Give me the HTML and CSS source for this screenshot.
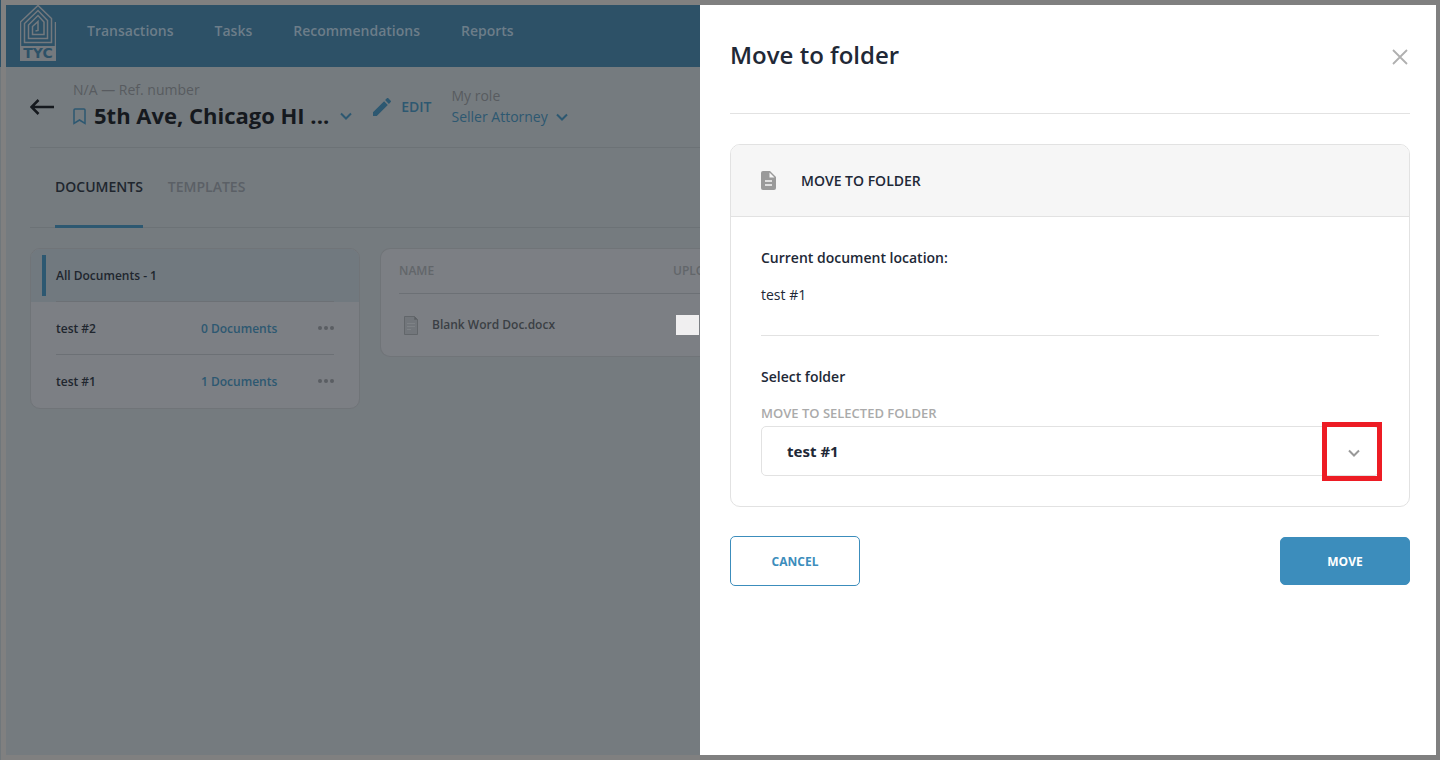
FILE: index.html
```html
<!DOCTYPE html>
<html lang="en">
<head>
    <meta charset="UTF-8">
    <meta name="viewport" content="width=device-width, initial-scale=1.0">
    <title>Move to folder</title>
    <link rel="stylesheet" href="styles.css">
</head>
<body>
    <div class="app">
        <header class="topbar">
            <a href="#" class="logo" aria-label="TYC">
                <svg width="36" height="56" viewBox="0 0 36 56">
                    <rect x="0" y="41" width="36" height="15" fill="#74797e"/>
                    <path d="M35.500 17V41M0.500 41V17L18 0.500L31.500 13.500V37.500H4.500V18.500L18 5.500L27.500 15.500V33.500H8.500V20L18 10.500L24 17V29.500H12.500V21.500L18 16.500V25.500L15.500 26" fill="none" stroke="#74797e" stroke-width="1.500"/>
                    <text x="18" y="53" class="logo-text" text-anchor="middle">TYC</text>
                </svg>
            </a>
            <nav class="nav">
                <a href="#">Transactions</a>
                <a href="#">Tasks</a>
                <a href="#">Recommendations</a>
                <a href="#">Reports</a>
            </nav>
        </header>

        <main class="content">
            <!-- Transaction header -->
            <section class="deal">
                <a href="#" class="back" aria-label="Back">
                    <svg width="24" height="16" viewBox="0 0 24 16" fill="none" stroke="#15191e" stroke-width="2.500"><path d="M24 8H2M8.500 1L1.500 8L8.500 15"/></svg>
                </a>
                <div class="deal-info">
                    <div class="ref">N/A — Ref. number</div>
                    <div class="deal-title">
                        <svg width="13" height="17" viewBox="0 0 13 17" fill="none" stroke="#2d5871" stroke-width="1.500"><path d="M1 2Q1 1 2 1H11Q12 1 12 2V15.500L6.500 12L1 15.500Z"/></svg>
                        <h1>5th Ave, Chicago HI ...</h1>
                        <svg class="chevron" width="12" height="8" viewBox="0 0 12 8" fill="none" stroke="#2d5871" stroke-width="2"><path d="M1 1.500L6 6.500L11 1.500"/></svg>
                    </div>
                </div>
                <button class="edit">
                    <svg width="18" height="18" viewBox="0 0 18 18" fill="#2d5871"><path d="M0 14.250V18H3.750L14.800 6.900L11.100 3.200ZM17.700 4.100C18.100 3.700 18.100 3 17.700 2.700L15.300 0.300C15 -0.100 14.300 -0.100 13.900 0.300L12.100 2.100L15.900 5.900Z"/></svg>
                    EDIT
                </button>
                <div class="role">
                    <div class="role-label">My role</div>
                    <button class="role-value">Seller Attorney
                        <svg width="12" height="8" viewBox="0 0 12 8" fill="none" stroke="#2d5871" stroke-width="2"><path d="M1 1.500L6 6.500L11 1.500"/></svg>
                    </button>
                </div>
            </section>

            <nav class="tabs">
                <a href="#" class="tab active">DOCUMENTS</a>
                <a href="#" class="tab">TEMPLATES</a>
            </nav>

            <div class="columns">
                <ul class="folders">
                    <li class="folder current"><div class="folder-row"><span>All Documents - 1</span></div></li>
                    <li class="folder">
                        <div class="folder-row">
                            <span class="folder-name">test #2</span>
                            <a href="#">0 Documents</a>
                            <button class="more" aria-label="More"><svg width="16" height="4" viewBox="0 0 16 4" fill="#5a5e63"><circle cx="2" cy="2" r="2"/><circle cx="8" cy="2" r="2"/><circle cx="14" cy="2" r="2"/></svg></button>
                        </div>
                    </li>
                    <li class="folder">
                        <div class="folder-row">
                            <span class="folder-name">test #1</span>
                            <a href="#">1 Documents</a>
                            <button class="more" aria-label="More"><svg width="16" height="4" viewBox="0 0 16 4" fill="#5a5e63"><circle cx="2" cy="2" r="2"/><circle cx="8" cy="2" r="2"/><circle cx="14" cy="2" r="2"/></svg></button>
                        </div>
                    </li>
                </ul>

                <div class="files">
                    <table>
                        <thead>
                            <tr><th class="col-name">NAME</th><th>UPLOADED</th></tr>
                        </thead>
                        <tbody>
                            <tr>
                                <td>
                                    <div class="file">
                                        <svg width="14" height="19" viewBox="0 0 14 19" fill="#72767b" stroke="#62666a"><path d="M0.500 0.500H10.500L13.500 3.500V18.500H0.500Z"/><path d="M10.500 0.500V3.500H13.500" fill="#5a5e63"/><path d="M3 7.500H11M3 10.500H11M3 13.500H7" stroke="#7e8286"/></svg>
                                        Blank Word Doc.docx
                                    </div>
                                </td>
                                <td><div class="redacted"></div></td>
                            </tr>
                        </tbody>
                    </table>
                </div>
            </div>
        </main>
    </div>

    <!-- Move to folder panel -->
    <aside class="drawer">
        <div class="drawer-head">
            <h2>Move to folder</h2>
            <button class="close" aria-label="Close">
                <svg width="16" height="16" viewBox="0 0 16 16" fill="none" stroke="#b0b0b0" stroke-width="1.800"><path d="M1 1L15 15M15 1L1 15"/></svg>
            </button>
        </div>
        <section class="card">
            <div class="card-head">
                <svg width="15" height="19" viewBox="0 0 15 19"><path d="M2 0H9L15 6V17Q15 19 13 19H2Q0 19 0 17V2Q0 0 2 0Z" fill="#9a9a9a"/><path d="M8.500 1.500V6.500H13.500Z" fill="#f6f6f6"/><path d="M4 10H11M4 14H11" stroke="#f6f6f6" stroke-width="1.500"/></svg>
                <h3>MOVE TO FOLDER</h3>
            </div>
            <div class="card-body">
                <div class="location">
                    <h4>Current document location:</h4>
                    <p>test #1</p>
                </div>
                <h4>Select folder</h4>
                <label for="folder">MOVE TO SELECTED FOLDER</label>
                <div class="select-box">
                    <select id="folder">
                        <option>test #1</option>
                        <option>test #2</option>
                    </select>
                    <div class="highlight">
                        <svg width="12" height="8" viewBox="0 0 12 8" fill="none" stroke="#999" stroke-width="2"><path d="M1 1.500L6 6.500L11 1.500"/></svg>
                    </div>
                </div>
            </div>
        </section>
        <div class="actions">
            <button class="btn">CANCEL</button>
            <button class="btn btn-primary">MOVE</button>
        </div>
    </aside>
</body>
</html>
```
FILE: styles.css
```css
* {
    box-sizing: border-box;
}
body {
    margin: 0;
    padding: 5px 4px 5px 6px;
    min-height: 100vh;
    display: flex;
    font-family: "Open Sans", "Noto Sans", sans-serif;
    font-size: 14px;
    line-height: 20px;
    color: #212836;
    background: linear-gradient(#2d5167 67px, #70777b 67px) no-repeat left top / 1px 100% #808080;
}
h1, h2, h3, h4, p, ul {
    margin: 0;
    padding: 0;
}
a {
    color: inherit;
    text-decoration: none;
}
button {
    font: inherit;
    color: inherit;
    background: none;
    border: none;
    padding: 0;
    cursor: pointer;
}
svg {
    display: block;
    flex: none;
}
.app {
    flex: 1;
    min-width: 0;
    overflow: hidden;
    background: #757b7f;
}
.topbar {
    height: 62px;
    display: flex;
    background: #2d5167;
    padding-left: 14px;
}
.logo-text {
    font-family: "DejaVu Sans", sans-serif;
    font-size: 14px;
    font-weight: 700;
    fill: #2d5167;
}
.nav {
    display: flex;
    gap: 41px;
    margin-left: 31px;
    padding-top: 16px;
    font-weight: 600;
    color: #6c7d89;
}
.content {
    padding-left: 24px;
}
.deal {
    height: 81px;
    display: flex;
    border-bottom: 1px solid #6c7276;
    white-space: nowrap;
}
.back {
    margin-top: 32px;
}
.deal-info {
    margin-left: 19px;
    padding-top: 13px;
}
.ref,
.role-label {
    color: #585b60;
}
.deal-title {
    display: flex;
    align-items: center;
    height: 32px;
}
.deal-title h1 {
    margin-left: 8px;
    padding-bottom: 2px;
    font-size: 22px;
    line-height: 30px;
    color: #15191e;
}
.chevron {
    margin-left: 11px;
}
.edit {
    display: flex;
    align-items: center;
    gap: 10px;
    height: 80px;
    margin-left: 21px;
    font-weight: 600;
    color: #2d5871;
}
.role {
    margin-left: 20px;
    padding-top: 19px;
}
.role-value {
    display: flex;
    align-items: center;
    gap: 8px;
    margin-top: 1px;
    color: #2d5871;
}
.tabs {
    display: flex;
    gap: 25px;
    height: 80px;
    padding-left: 25px;
    border-bottom: 1px solid #6c7276;
    font-weight: 600;
}
.tab {
    height: 80px;
    padding-top: 29px;
    color: #5b6066;
}
.tab.active {
    color: #20262e;
    border-bottom: 3px solid #2d5871;
}
.columns {
    display: flex;
    align-items: flex-start;
    gap: 20px;
    margin-top: 20px;
    font-size: 12px;
    font-weight: 600;
}
.folders,
.files {
    border: 1px solid #707478;
    border-radius: 10px;
    background: #7c7f84;
}
.folders {
    flex: none;
    width: 330px;
    list-style: none;
    overflow: hidden;
}
.folder {
    padding: 0 25px;
    color: #20262e;
}
.folder-row {
    display: flex;
    align-items: center;
    height: 53px;
    padding-top: 1px;
    border-bottom: 1px solid #6c7075;
}
.folder:last-child .folder-row {
    border-bottom: none;
}
.folder.current {
    display: flex;
    align-items: center;
    padding-left: 11px;
    background: #71797f;
}
.folder.current .folder-row {
    flex: 1;
}
.folder.current::before {
    content: "";
    width: 4px;
    height: 41px;
    margin-right: 10px;
    background: #2d5871;
}
.folder-name {
    width: 145px;
}
.folder a {
    color: #2d5871;
}
.more {
    margin-left: auto;
    padding-bottom: 2px;
}
.files {
    flex: 1;
    min-width: 0;
    overflow: hidden;
    padding-left: 18px;
    border-right: none;
    border-radius: 10px 0 0 10px;
}
.files table {
    width: 100%;
    min-width: 360px;
    border-spacing: 0;
}
.files th {
    height: 45px;
    padding: 0;
    text-align: left;
    font-weight: 600;
    color: #62666a;
    border-bottom: 1px solid #6c7075;
}
.files td {
    height: 62px;
    padding: 0;
}
.col-name {
    width: 274px;
}
.file {
    display: flex;
    align-items: center;
    gap: 14px;
    padding-left: 5px;
    color: #3b3f45;
}
.redacted {
    width: 23px;
    height: 20px;
    margin-left: 3px;
    background: #f0eff0;
}
.drawer {
    flex: none;
    width: 736px;
    padding: 0 26px 0 30px;
    background: #fff;
}
.drawer-head {
    display: flex;
    justify-content: space-between;
    height: 109px;
    border-bottom: 1px solid #e2e2e2;
}
.drawer-head h2 {
    margin-top: 34px;
    font-size: 24px;
    line-height: 32px;
    font-weight: 600;
}
.close {
    height: 16px;
    margin: 44px 2px 0;
}
.card {
    margin-top: 30px;
    border: 1px solid #e2e2e2;
    border-radius: 10px;
}
.card-head {
    display: flex;
    align-items: center;
    gap: 25px;
    height: 72px;
    padding: 0 30px;
    background: #f6f6f6;
    border-bottom: 1px solid #e2e2e2;
    border-radius: 9px 9px 0 0;
}
h3,
h4 {
    font-size: 14px;
    font-weight: 600;
}
.card-body {
    padding: 31px 30px 30px;
}
.location {
    margin-bottom: 31px;
    padding-bottom: 30px;
    border-bottom: 1px solid #e2e2e2;
}
.location p {
    margin-top: 17px;
}
.card-body label {
    display: block;
    margin: 16px 0 3px;
    font-size: 13px;
    font-weight: 600;
    color: #aaa;
}
.select-box {
    position: relative;
}
.select-box select {
    display: block;
    width: 100%;
    height: 50px;
    padding: 0 25px;
    appearance: none;
    border: 1px solid #e2e2e2;
    border-radius: 5px;
    background: #fff;
    color: #212836;
    font-family: "Noto Sans", sans-serif;
    font-size: 15px;
    font-weight: 700;
}
.highlight {
    position: absolute;
    top: -4px;
    right: -3px;
    width: 60px;
    height: 59px;
    display: flex;
    align-items: center;
    justify-content: center;
    padding: 3px 0 0 4px;
    border: 5px solid #ed1c24;
    pointer-events: none;
}
.actions {
    display: flex;
    align-items: center;
    justify-content: space-between;
    margin-top: 29px;
}
.btn {
    width: 130px;
    height: 50px;
    padding-top: 2px;
    border: 1px solid #3c8dbc;
    border-radius: 5px;
    font-size: 12px;
    font-weight: 700;
    color: #3c8dbc;
}
.btn-primary {
    height: 48px;
    background: #3c8dbc;
    color: #fff;
}
```
